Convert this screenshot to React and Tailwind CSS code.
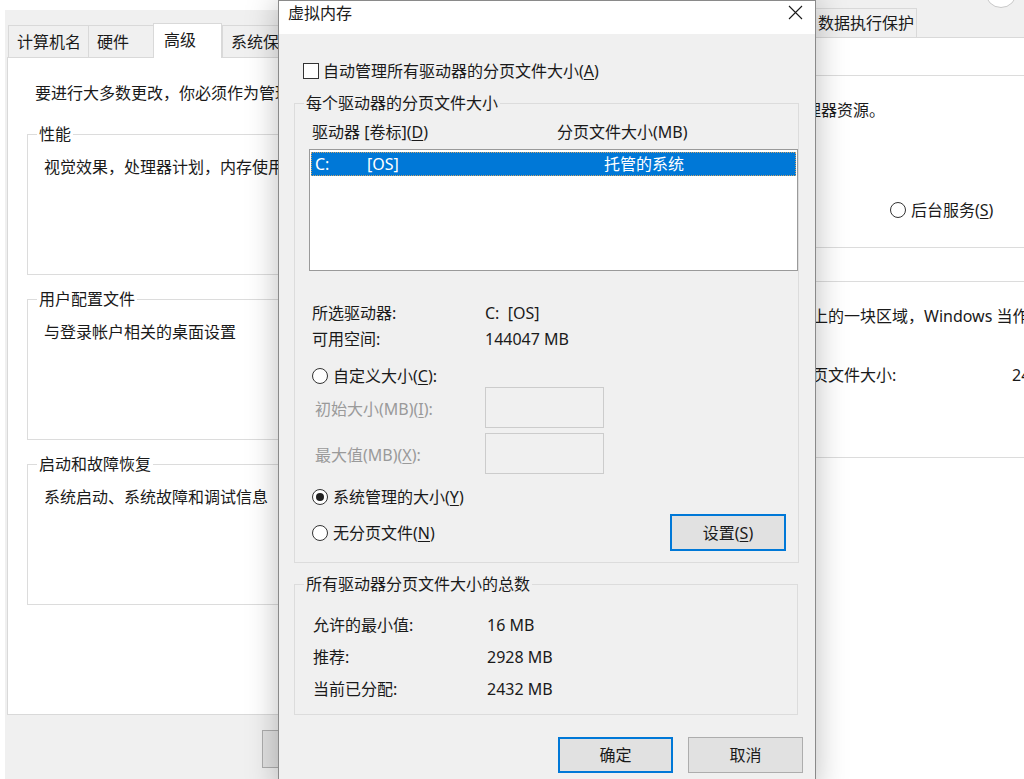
import React from "react";

function U({ children }) {
  return <span className="underline underline-offset-2">{children}</span>;
}

function Radio({ checked }) {
  return (
    <span className="w-[16px] h-[16px] rounded-full border border-[#333] bg-white flex items-center justify-center shrink-0">
      {checked && <span className="w-[8px] h-[8px] rounded-full bg-[#222]" />}
    </span>
  );
}

function LTab({ children, sel, w }) {
  if (sel) {
    return (
      <div className={`${w} h-[35px] -mb-px relative z-10 bg-white border border-b-0 border-[#d9d9d9] pl-[10px] leading-[33px]`}>
        {children}
      </div>
    );
  }
  return (
    <div className={`${w} h-[32px] bg-[#f0f0f0] border-t border-l border-[#d9d9d9] pl-[8px] leading-[32px]`}>
      {children}
    </div>
  );
}

function LGroup({ title, text, mt }) {
  return (
    <fieldset className={`${mt} w-[560px] h-[152px] border border-[#dcdcdc] shrink-0`}>
      <legend className="ml-[9px] px-[2px] leading-[22px]">{title}</legend>
      <div className="mt-[11px] pl-[16px] leading-[22px] whitespace-nowrap">{text}</div>
    </fieldset>
  );
}

function WinButton({ children, primary, w }) {
  return (
    <div
      className={`${w} h-[36px] flex items-center justify-center bg-[#e1e1e1] ${
        primary ? "border-2 border-[#0078d7]" : "border border-[#adadad]"
      }`}
    >
      {children}
    </div>
  );
}

export default function App() {
  return (
    <div className="relative w-[1024px] h-[779px] overflow-hidden bg-white text-[16px] text-[#1a1a1a] font-['Noto_Sans','Noto_Sans_CJK_SC',sans-serif]">
      {/* Left window: System Properties */}
      <div className="absolute left-[5px] top-[10px] w-[640px] h-[769px] bg-[#f0f0f0] flex flex-col">
        <div className="flex items-end h-[47px] pl-[3px] shrink-0">
          <LTab w="w-[80px]">计算机名</LTab>
          <LTab w="w-[65px]">硬件</LTab>
          <LTab sel w="w-[69px]">高级</LTab>
          <LTab w="w-[88px]">系统保护</LTab>
          <LTab w="w-[60px]">远程</LTab>
        </div>
        <div className="ml-[2px] h-[658px] bg-white border border-[#d9d9d9] pl-[19px] pt-[24px] flex flex-col shrink-0">
          <div className="ml-[8px] leading-[22px] whitespace-nowrap">要进行大多数更改，你必须作为管理员登录。</div>
          <LGroup mt="mt-[19px]" title="性能" text="视觉效果，处理器计划，内存使用，以及虚拟内存" />
          <LGroup mt="mt-[13px]" title="用户配置文件" text="与登录帐户相关的桌面设置" />
          <LGroup mt="mt-[13px]" title="启动和故障恢复" text="系统启动、系统故障和调试信息" />
        </div>
        <div className="flex pl-[257px] pt-[15px] gap-[10px]">
          <div className="w-[100px] h-[38px] bg-[#e1e1e1] border border-[#adadad] flex items-center justify-center">确定</div>
          <div className="w-[100px] h-[38px] bg-[#e1e1e1] border border-[#adadad] flex items-center justify-center">取消</div>
        </div>
      </div>

      {/* Right window: Performance Options */}
      <div className="absolute left-[650px] top-0 w-[420px] h-[779px] bg-[#f0f0f0] flex flex-col">
        <div className="absolute left-[335px] top-[-24px] w-[32px] h-[32px] rounded-full border border-[#c8c8c8] bg-white" />
        <div className="flex items-end h-[37px] pl-[25px] shrink-0">
          <div className="w-[80px] h-[29px] border-t border-l border-[#d9d9d9] pl-[7px] leading-[29px]">视觉效果</div>
          <div className="w-[55px] h-[29px] border-t border-l border-[#d9d9d9] pl-[7px] leading-[29px] bg-white">高级</div>
          <div className="w-[107px] h-[29px] border-t border-l border-r border-[#d9d9d9] pl-[7px] leading-[29px]">数据执行保护</div>
        </div>
        <div className="flex-1 bg-white border-t border-l border-[#d9d9d9] pl-[19px] flex flex-col">
          <fieldset className="mt-[26px] w-[500px] h-[184px] border border-[#dcdcdc] shrink-0">
            <legend className="ml-[9px] px-[2px] leading-[22px]">处理器计划</legend>
            <div className="mt-[13px] pl-[22px] leading-[22px] whitespace-nowrap">选择如何分配处理器资源。</div>
            <div className="mt-[78px] pl-[22px] flex items-center leading-[22px]">
              <div className="w-[197px] flex items-center gap-[5px]">
                <Radio checked />
                <span>程序(<U>P</U>)</span>
              </div>
              <div className="flex items-center gap-[5px]">
                <Radio />
                <span>后台服务(<U>S</U>)</span>
              </div>
            </div>
          </fieldset>
          <fieldset className="mt-[22px] w-[500px] h-[188px] border border-[#dcdcdc] shrink-0">
            <legend className="ml-[9px] px-[2px] leading-[22px]">虚拟内存</legend>
            <div className="mt-[13px] pl-[29px] leading-[22px] whitespace-nowrap">分页文件是硬盘上的一块区域，Windows 当作 RAM 使用。</div>
            <div className="mt-[37px] pl-[29px] flex leading-[22px] whitespace-nowrap">
              <span className="w-[312px]">所有驱动器总分页文件大小:</span>
              <span>2432 MB</span>
            </div>
          </fieldset>
        </div>
      </div>

      {/* Dialog: 虚拟内存 */}
      <div className="absolute left-[278px] top-0 w-[538px] h-[792px] border border-[#8a8a8a] bg-[#f0f0f0] shadow-[0_0_30px_rgba(0,0,0,0.26)] flex flex-col">
        <div className="h-[33px] bg-white flex justify-between shrink-0">
          <div className="pl-[9px] leading-[22px] pt-[1px]">虚拟内存</div>
          <svg className="mt-[4px] mr-[12px]" width="15" height="15" viewBox="0 0 15 15">
            <path d="M1 1L14 14M14 1L1 14" stroke="#1a1a1a" strokeWidth="1.1" fill="none" />
          </svg>
        </div>

        <div className="pl-[24px] mt-[26px] flex items-center gap-[4px] leading-[22px]">
          <span className="w-[16px] h-[16px] border border-[#333] bg-white shrink-0" />
          <span>自动管理所有驱动器的分页文件大小(<U>A</U>)</span>
        </div>

        <fieldset className="ml-[15px] mt-[10px] w-[504px] h-[471px] border border-[#dcdcdc] shrink-0">
          <legend className="ml-[9px] px-[2px] leading-[22px]">每个驱动器的分页文件大小</legend>
          <div className="mt-[7px] pl-[17px] flex leading-[22px]">
            <span className="w-[245px]">驱动器 [卷标](<U>D</U>)</span>
            <span>分页文件大小(MB)</span>
          </div>
          <div className="mt-[6px] ml-[14px] w-[489px] h-[122px] border border-[#9a9a9a] bg-white px-[1px] pt-[2px]">
            <div className="h-[24px] bg-[#0078d7] text-white flex items-center pl-[4px] outline-1 outline-dotted outline-[#c9a46b] -outline-offset-1">
              <span className="w-[52px]">C:</span>
              <span className="w-[237px]">[OS]</span>
              <span>托管的系统</span>
            </div>
          </div>

          <div className="mt-[29px] pl-[17px] h-[26px] flex items-center">
            <span className="w-[173px]">所选驱动器:</span>
            <span>C:&nbsp;&nbsp;[OS]</span>
          </div>
          <div className="pl-[17px] h-[26px] flex items-center">
            <span className="w-[173px]">可用空间:</span>
            <span>144047 MB</span>
          </div>

          <div className="mt-[13px] pl-[17px] h-[22px] flex items-center gap-[5px]">
            <Radio />
            <span>自定义大小(<U>C</U>):</span>
          </div>
          <div className="pl-[20px] h-[41px] flex items-center text-[#9a9a9a]">
            <span className="w-[170px] pt-[2px]">初始大小(MB)(<U>I</U>):</span>
            <span className="w-[119px] h-[41px] border border-[#cccccc] bg-[#f0f0f0]" />
          </div>
          <div className="mt-[5px] pl-[20px] h-[41px] flex items-center text-[#9a9a9a]">
            <span className="w-[170px] pt-[2px]">最大值(MB)(<U>X</U>):</span>
            <span className="w-[119px] h-[41px] border border-[#cccccc] bg-[#f0f0f0]" />
          </div>

          <div className="mt-[12px] pl-[17px] h-[22px] flex items-center gap-[5px]">
            <Radio checked />
            <span>系统管理的大小(<U>Y</U>)</span>
          </div>
          <div className="mt-[6px] pl-[17px] pr-[12px] h-[37px] flex items-center justify-between">
            <div className="flex items-center gap-[5px]">
              <Radio />
              <span>无分页文件(<U>N</U>)</span>
            </div>
            <div className="w-[116px] h-[37px] flex items-center justify-center bg-[#e1e1e1] border-2 border-[#0078d7]">
              <span>设置(<U>S</U>)</span>
            </div>
          </div>
        </fieldset>

        <fieldset className="ml-[15px] mt-[10px] w-[504px] h-[142px] border border-[#dcdcdc] shrink-0">
          <legend className="ml-[9px] px-[2px] leading-[22px]">所有驱动器分页文件大小的总数</legend>
          <div className="mt-[14px] pl-[18px] h-[32px] flex items-center">
            <span className="w-[174px]">允许的最小值:</span>
            <span>16 MB</span>
          </div>
          <div className="pl-[18px] h-[32px] flex items-center">
            <span className="w-[174px]">推荐:</span>
            <span>2928 MB</span>
          </div>
          <div className="pl-[18px] h-[32px] flex items-center">
            <span className="w-[174px]">当前已分配:</span>
            <span>2432 MB</span>
          </div>
        </fieldset>

        <div className="mt-[22px] pr-[12px] flex justify-end gap-[15px]">
          <WinButton primary w="w-[115px]">确定</WinButton>
          <WinButton w="w-[115px]">取消</WinButton>
        </div>
      </div>
    </div>
  );
}
